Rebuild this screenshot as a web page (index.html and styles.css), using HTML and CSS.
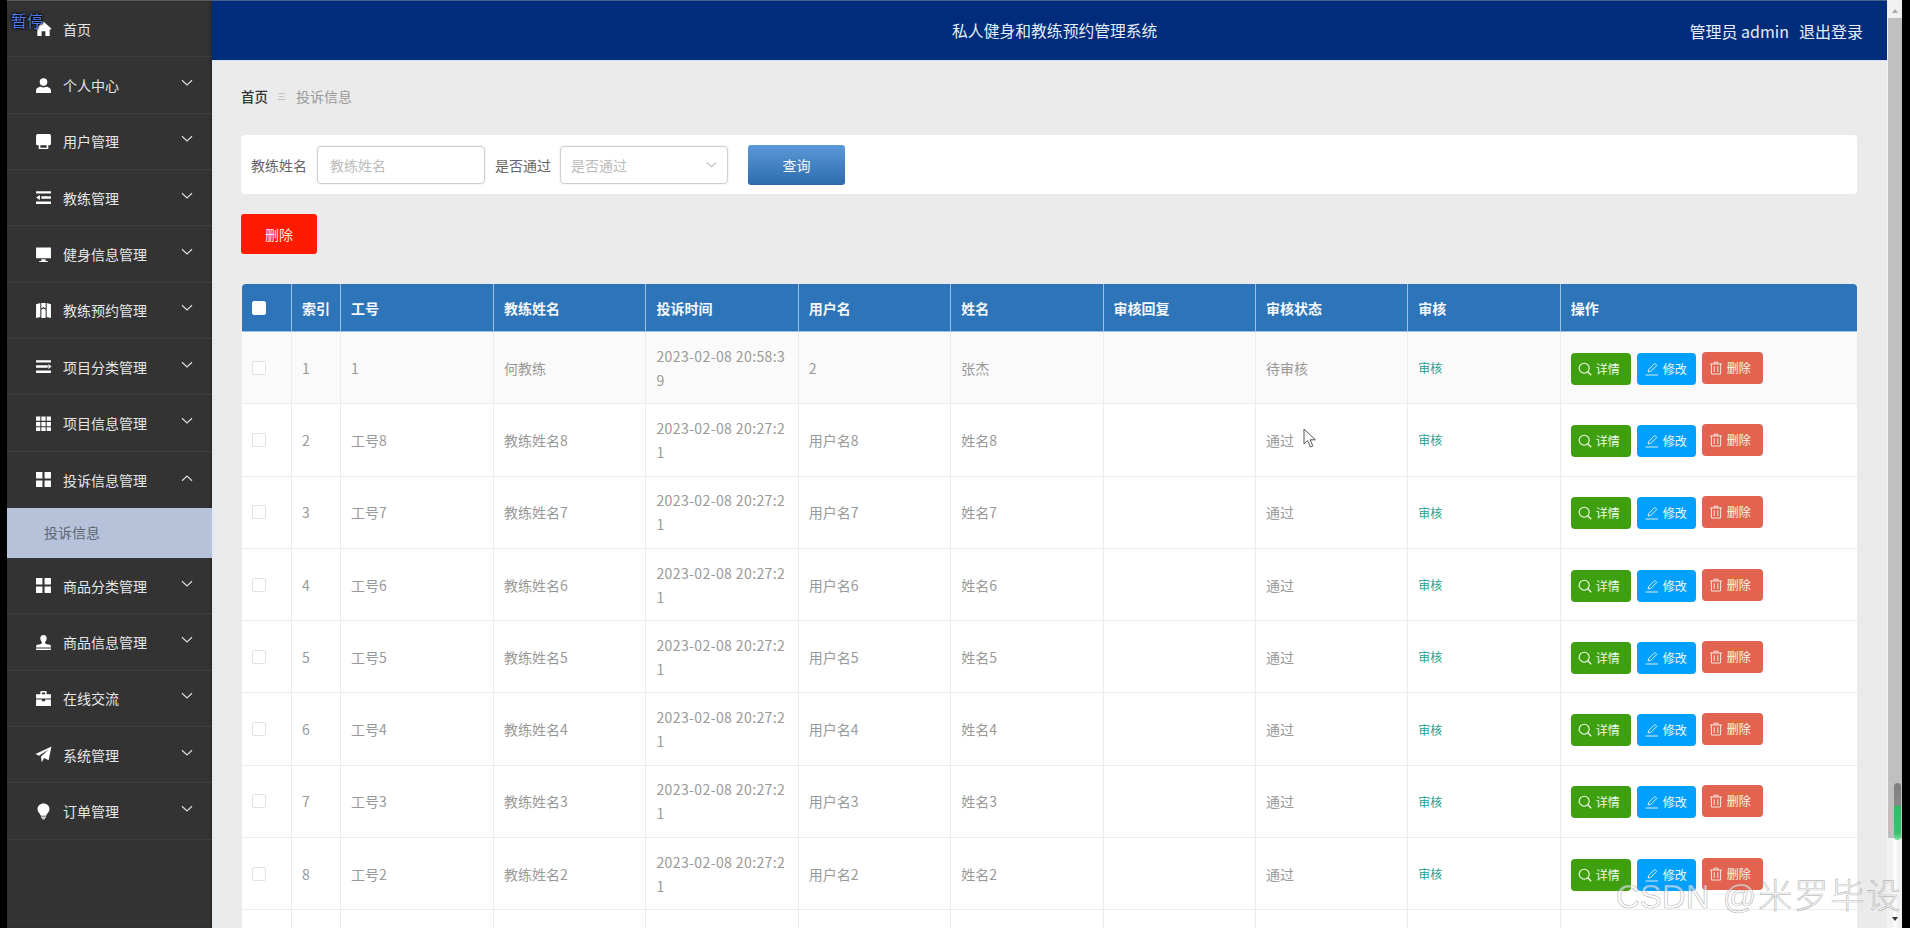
FILE: index.html
```html
<!DOCTYPE html>
<html lang="zh-CN">
<head>
<meta charset="utf-8">
<title>私人健身和教练预约管理系统</title>
<link rel="stylesheet" href="styles.css">
</head>
<body>
<svg class="sprite" xmlns="http://www.w3.org/2000/svg">
  <symbol id="i-home" viewBox="0 0 16 16"><path d="M8 1.5 0.5 8.2 1.5 9.2 2.2 8.6V15H6.2V10.5H9.8V15H13.8V8.6L14.5 9.2 15.5 8.2Z"/></symbol>
  <symbol id="i-user" viewBox="0 0 16 16"><circle cx="8" cy="4.8" r="3.6"/><path d="M1 15V12.8C1 10.4 3.6 9.4 5.4 9.2 6.6 10 9.4 10 10.6 9.2 12.4 9.4 15 10.4 15 12.8V15Z"/></symbol>
  <symbol id="i-print" viewBox="0 0 16 16"><path d="M2.5 1H13.5Q15 1 15 2.5V10Q15 11.5 13.5 11.5H12.5V15H3.5V11.5H2.5Q1 11.5 1 10V2.5Q1 1 2.5 1ZM5 11.5V13.8H11V11.5Z"/></symbol>
  <symbol id="i-indent" viewBox="0 0 16 16"><path d="M1 2H15V4.2H1ZM6 6.9H15V9.1H6ZM1 11.8H15V14H1ZM4.6 5.6V10.4L1 8Z"/></symbol>
  <symbol id="i-desktop" viewBox="0 0 16 16"><path d="M1 1.5H15V11.5H1ZM6 12.5H10V14H12V15H4V14H6Z"/></symbol>
  <symbol id="i-map" viewBox="0 0 16 16"><path d="M1 2 5 1V14L1 15ZM6 1H10V6L8 4.6 6 6ZM11 1 15 2V15L11 14ZM6 7.4 8 6 10 7.4V15H6Z"/></symbol>
  <symbol id="i-list" viewBox="0 0 16 16"><path d="M1 2H15V4.2H1ZM1 6.9H12V9.1H1ZM1 11.8H15V14H1ZM12.6 5.6 15.6 8 12.6 10.4Z"/></symbol>
  <symbol id="i-table" viewBox="0 0 16 16"><path d="M1 1.5H5V5.5H1ZM6 1.5H10V5.5H6ZM11 1.5H15V5.5H11ZM1 6.5H5V10.5H1ZM6 6.5H10V10.5H6ZM11 6.5H15V10.5H11ZM1 11.5H5V15H1ZM6 11.5H10V15H6ZM11 11.5H15V15H11Z"/></symbol>
  <symbol id="i-grid" viewBox="0 0 16 16"><path d="M1 1H7V7H1ZM9 1H15V7H9ZM1 9H7V15H1ZM9 9H15V15H9Z"/></symbol>
  <symbol id="i-stamp" viewBox="0 0 16 16"><path d="M8 1C10 1 11 2.4 11 4 11 5.6 10.2 6.6 9.6 7.6 9.2 8.6 9.8 9.4 11 9.6L14 10.2Q15 10.5 15 12V12.6H1V12Q1 10.5 2 10.2L5 9.6C6.2 9.4 6.8 8.6 6.4 7.6 5.8 6.6 5 5.6 5 4 5 2.4 6 1 8 1ZM1 13.6H15V15H1Z"/></symbol>
  <symbol id="i-case" viewBox="0 0 16 16"><path d="M5 4V2Q5 1 6 1H10Q11 1 11 2V4H15V8H1V4ZM6.4 4H9.6V2.4H6.4ZM1 9H6.5V10.5H9.5V9H15V15H1Z"/></symbol>
  <symbol id="i-plane" viewBox="0 0 16 16"><path d="M15.5 0.5 12.8 13.5 8.6 11.4 6.4 15.4 5.6 10.2 13 3 3.8 9.2 0.5 7.6Z"/></symbol>
  <symbol id="i-bulb" viewBox="0 0 16 16"><path d="M8 0.5C11.4 0.5 13.6 3 13.6 5.8 13.6 8.6 11 9.8 10.6 12H5.4C5 9.8 2.4 8.6 2.4 5.8 2.4 3 4.6 0.5 8 0.5ZM5.6 12.8H10.4V13.8H5.6ZM6.4 14.4H9.6L8.8 15.5H7.2Z"/></symbol>
  <symbol id="i-chev" viewBox="0 0 12 8"><path d="M1 1.2 6 6 11 1.2" fill="none" stroke="currentColor" stroke-width="1.2"/></symbol>
  <symbol id="i-search" viewBox="0 0 14 14"><circle cx="6.2" cy="6.2" r="5" fill="none" stroke="currentColor" stroke-width="1.1"/><path d="M9.8 9.8 13.2 13.2" fill="none" stroke="currentColor" stroke-width="1.3"/></symbol>
  <symbol id="i-edit" viewBox="0 0 14 14"><path d="M3 10 3.8 7.4 9.8 1.4 11.8 3.4 5.8 9.4ZM0.5 13H13" fill="none" stroke="currentColor" stroke-width=".9"/></symbol>
  <symbol id="i-trash" viewBox="0 0 14 14"><path d="M1 3H13M5 3V1.2H9V3M2.4 3V13H11.6V3M5.2 5.2V11M8.8 5.2V11" fill="none" stroke="currentColor" stroke-width=".9"/></symbol>
</svg>

<div class="screen">
  <nav class="sidebar">
    <a class="nav-item"><svg class="nav-icon"><use href="#i-home"/></svg><span>首页</span></a>
    <a class="nav-item"><svg class="nav-icon"><use href="#i-user"/></svg><span>个人中心</span><svg class="chev"><use href="#i-chev"/></svg></a>
    <a class="nav-item"><svg class="nav-icon"><use href="#i-print"/></svg><span>用户管理</span><svg class="chev"><use href="#i-chev"/></svg></a>
    <a class="nav-item"><svg class="nav-icon"><use href="#i-indent"/></svg><span>教练管理</span><svg class="chev"><use href="#i-chev"/></svg></a>
    <a class="nav-item"><svg class="nav-icon"><use href="#i-desktop"/></svg><span>健身信息管理</span><svg class="chev"><use href="#i-chev"/></svg></a>
    <a class="nav-item"><svg class="nav-icon"><use href="#i-map"/></svg><span>教练预约管理</span><svg class="chev"><use href="#i-chev"/></svg></a>
    <a class="nav-item"><svg class="nav-icon"><use href="#i-list"/></svg><span>项目分类管理</span><svg class="chev"><use href="#i-chev"/></svg></a>
    <a class="nav-item"><svg class="nav-icon"><use href="#i-table"/></svg><span>项目信息管理</span><svg class="chev"><use href="#i-chev"/></svg></a>
    <a class="nav-item open"><svg class="nav-icon"><use href="#i-grid"/></svg><span>投诉信息管理</span><svg class="chev up"><use href="#i-chev"/></svg></a>
    <a class="nav-sub">投诉信息</a>
    <a class="nav-item"><svg class="nav-icon"><use href="#i-grid"/></svg><span>商品分类管理</span><svg class="chev"><use href="#i-chev"/></svg></a>
    <a class="nav-item"><svg class="nav-icon"><use href="#i-stamp"/></svg><span>商品信息管理</span><svg class="chev"><use href="#i-chev"/></svg></a>
    <a class="nav-item"><svg class="nav-icon"><use href="#i-case"/></svg><span>在线交流</span><svg class="chev"><use href="#i-chev"/></svg></a>
    <a class="nav-item"><svg class="nav-icon"><use href="#i-plane"/></svg><span>系统管理</span><svg class="chev"><use href="#i-chev"/></svg></a>
    <a class="nav-item"><svg class="nav-icon"><use href="#i-bulb"/></svg><span>订单管理</span><svg class="chev"><use href="#i-chev"/></svg></a>
  </nav>

  <div class="right">
    <header class="topbar">
      <div class="title">私人健身和教练预约管理系统</div>
      <div class="account"><span>管理员 admin</span><span>退出登录</span></div>
    </header>
    <main class="main">
      <div class="crumbs"><b>首页</b><i>三</i><span>投诉信息</span></div>
      <form class="search">
        <label>教练姓名</label>
        <div class="field input-field">教练姓名</div>
        <label>是否通过</label>
        <div class="field select-field">是否通过<svg class="select-arrow"><use href="#i-chev"/></svg></div>
        <button class="query" type="button">查询</button>
      </form>
      <button class="bulk-del" type="button">删除</button>
      <table class="grid">
        <thead>
          <tr>
            <th class="c-c"><span class="check head"></span></th><th class="c-s">索引</th><th class="c-g">工号</th><th class="c-m">教练姓名</th><th class="c-m">投诉时间</th><th class="c-m">用户名</th><th class="c-m">姓名</th><th class="c-m">审核回复</th><th class="c-m">审核状态</th><th class="c-m">审核</th><th>操作</th>
          </tr>
        </thead>
        <tbody>
          <tr><td><span class="check"></span></td><td>1</td><td>1</td><td>何教练</td><td class="time">2023-02-08 20:58:39</td><td>2</td><td>张杰</td><td></td><td>待审核</td><td><a class="audit">审核</a></td><td><div class="ops"><a class="btn green"><svg><use href="#i-search"/></svg>详情</a><a class="btn blue"><svg><use href="#i-edit"/></svg>修改</a><a class="btn red"><svg><use href="#i-trash"/></svg>删除</a></div></td></tr>
          <tr><td><span class="check"></span></td><td>2</td><td>工号8</td><td>教练姓名8</td><td class="time">2023-02-08 20:27:21</td><td>用户名8</td><td>姓名8</td><td></td><td>通过</td><td><a class="audit">审核</a></td><td><div class="ops"><a class="btn green"><svg><use href="#i-search"/></svg>详情</a><a class="btn blue"><svg><use href="#i-edit"/></svg>修改</a><a class="btn red"><svg><use href="#i-trash"/></svg>删除</a></div></td></tr>
          <tr><td><span class="check"></span></td><td>3</td><td>工号7</td><td>教练姓名7</td><td class="time">2023-02-08 20:27:21</td><td>用户名7</td><td>姓名7</td><td></td><td>通过</td><td><a class="audit">审核</a></td><td><div class="ops"><a class="btn green"><svg><use href="#i-search"/></svg>详情</a><a class="btn blue"><svg><use href="#i-edit"/></svg>修改</a><a class="btn red"><svg><use href="#i-trash"/></svg>删除</a></div></td></tr>
          <tr><td><span class="check"></span></td><td>4</td><td>工号6</td><td>教练姓名6</td><td class="time">2023-02-08 20:27:21</td><td>用户名6</td><td>姓名6</td><td></td><td>通过</td><td><a class="audit">审核</a></td><td><div class="ops"><a class="btn green"><svg><use href="#i-search"/></svg>详情</a><a class="btn blue"><svg><use href="#i-edit"/></svg>修改</a><a class="btn red"><svg><use href="#i-trash"/></svg>删除</a></div></td></tr>
          <tr><td><span class="check"></span></td><td>5</td><td>工号5</td><td>教练姓名5</td><td class="time">2023-02-08 20:27:21</td><td>用户名5</td><td>姓名5</td><td></td><td>通过</td><td><a class="audit">审核</a></td><td><div class="ops"><a class="btn green"><svg><use href="#i-search"/></svg>详情</a><a class="btn blue"><svg><use href="#i-edit"/></svg>修改</a><a class="btn red"><svg><use href="#i-trash"/></svg>删除</a></div></td></tr>
          <tr><td><span class="check"></span></td><td>6</td><td>工号4</td><td>教练姓名4</td><td class="time">2023-02-08 20:27:21</td><td>用户名4</td><td>姓名4</td><td></td><td>通过</td><td><a class="audit">审核</a></td><td><div class="ops"><a class="btn green"><svg><use href="#i-search"/></svg>详情</a><a class="btn blue"><svg><use href="#i-edit"/></svg>修改</a><a class="btn red"><svg><use href="#i-trash"/></svg>删除</a></div></td></tr>
          <tr><td><span class="check"></span></td><td>7</td><td>工号3</td><td>教练姓名3</td><td class="time">2023-02-08 20:27:21</td><td>用户名3</td><td>姓名3</td><td></td><td>通过</td><td><a class="audit">审核</a></td><td><div class="ops"><a class="btn green"><svg><use href="#i-search"/></svg>详情</a><a class="btn blue"><svg><use href="#i-edit"/></svg>修改</a><a class="btn red"><svg><use href="#i-trash"/></svg>删除</a></div></td></tr>
          <tr><td><span class="check"></span></td><td>8</td><td>工号2</td><td>教练姓名2</td><td class="time">2023-02-08 20:27:21</td><td>用户名2</td><td>姓名2</td><td></td><td>通过</td><td><a class="audit">审核</a></td><td><div class="ops"><a class="btn green"><svg><use href="#i-search"/></svg>详情</a><a class="btn blue"><svg><use href="#i-edit"/></svg>修改</a><a class="btn red"><svg><use href="#i-trash"/></svg>删除</a></div></td></tr>
          <tr><td></td><td></td><td></td><td></td><td></td><td></td><td></td><td></td><td></td><td></td><td></td></tr>
        </tbody>
      </table>
    </main>
  </div>

  <aside class="scrollbar">
    <div class="sb-arrow sb-up"></div>
    <div class="sb-thumb"></div>
    <div class="sb-track"><div class="sb-arrow sb-down"></div></div>
    <div class="sb-pill"></div>
  </aside>
</div>

<div class="paused">暂停</div>
<svg class="cursor" viewBox="0 0 14 20"><path d="M1 1V16L4.6 12.6 7.4 19 9.8 18 7.2 11.8H12.4Z" fill="#fff" stroke="#555" stroke-width="1"/></svg>
<div class="watermark">CSDN @<span>米罗毕设</span></div>
</body>
</html>
```

FILE: styles.css
```css
* { box-sizing: border-box; }
html, body { margin: 0; height: 100%; }
body {
  position: relative;
  overflow: hidden;
  background: #000;
  font-family: "Noto Sans CJK SC", "Noto Sans", sans-serif;
  font-size: 14px;
  color: #999;
}
.sprite { position: absolute; width: 0; height: 0; }

.screen { display: flex; height: 928px; padding: 0 8px 0 7px; }

/* sidebar */
.sidebar {
  flex: 0 0 205px;
  background: #333;
  border-top: 1px solid #5c5c5c;
  box-shadow: inset -2px 0 2px #2b2b2b;
}
.nav-item {
  display: flex;
  align-items: center;
  height: 56.35px;
  padding: 0 19px 0 28px;
  border-bottom: 1px solid #3d3d3d;
  color: #e6e6e6;
  line-height: 20px;
}
.nav-item span { flex: 1; }
.nav-item.open { border-bottom: 0; }
.nav-icon { width: 17px; height: 17px; margin-right: 11px; fill: #fff; }
.chev { width: 12px; height: 8px; margin-bottom: 4px; color: #ddd; }
.chev.up { transform: rotate(180deg); }
.nav-sub {
  display: flex;
  align-items: center;
  height: 50px;
  padding-left: 37px;
  padding-bottom: 2px;
  background: #b5c2da;
  color: #5f6672;
}

/* right column */
.right { flex: 0 0 1675px; display: flex; flex-direction: column; min-width: 0; }
.topbar {
  flex: 0 0 60px;
  display: grid;
  grid-template-columns: 1fr auto;
  align-items: center;
  padding: 0 24px 0 0;
  background: #002c7c;
  border-top: 1px solid #4a6088;
  color: #e6edf7;
}
.title { font-size: 15.8px; text-align: center; padding-left: 208px; }
.account { display: flex; gap: 10px; font-size: 16px; }

.main {
  flex: 1;
  overflow: hidden;
  padding: 25px 30px 0 26px;
  background: #ebebeb;
  border-top: 1px solid #d5e3f5;
  border-left: 3px solid #e3e9f5;
}
.crumbs { display: flex; align-items: center; height: 20px; font-size: 14px; }
.crumbs b { color: #333; font-weight: 500; font-size: 13.5px; }
.crumbs i { margin: 0 10px 0 9px; font-style: normal; font-size: 9px; color: #bbb; }
.crumbs span { color: #9a9a9a; }

.search {
  display: flex;
  align-items: center;
  height: 59px;
  margin-top: 29px;
  padding-left: 10px;
  background: #fff;
  border-radius: 4px;
  color: #666;
}
.search label { width: 56px; white-space: nowrap; }
.field {
  display: flex;
  align-items: center;
  height: 38px;
  width: 168px;
  border: 1px solid #cfcfcf;
  box-shadow: 0 0 2px #ddd;
  border-radius: 4px;
  color: #bbb;
}
.input-field { margin: 0 10px; padding-left: 12px; }
.select-field { margin-left: 9px; padding: 0 10px; justify-content: space-between; }
.select-arrow { width: 11px; height: 8px; color: #bbb; }
.query {
  width: 97px;
  height: 40px;
  margin-left: 20px;
  border: 0;
  border-radius: 3px;
  background: linear-gradient(#5b98d8, #2c6cae);
  color: #f2f6fb;
  font: inherit;
}
.bulk-del {
  display: block;
  width: 76px;
  height: 40px;
  margin-top: 20px;
  border: 0;
  border-radius: 3px;
  background: #ff1a00;
  color: #ffe9e6;
  font: 14px "Noto Sans CJK SC", sans-serif;
}

/* table */
.grid {
  width: 1615px;
  margin: 30px 0 0 1px;
  table-layout: fixed;
  border-collapse: separate;
  border-spacing: 0;
}
.c-c { width: 50px; }
.c-s { width: 49px; }
.c-g { width: 153px; }
.c-m { width: 152.4px; }
.grid th {
  height: 48px;
  padding: 0 10px;
  background: #2d75b8;
  border-right: 1px solid #9cc1e2;
  border-bottom: 1px solid #9cc1e2;
  color: #f4f7fb;
  font-weight: 700;
  text-align: left;
}
.grid th:first-child { border-top-left-radius: 4px; }
.grid th:last-child { border-top-right-radius: 4px; border-right: 0; }
.grid td {
  height: 72.3px;
  padding: 0 10px;
  border-right: 1px solid #ececec;
  border-bottom: 1px solid #ececec;
  background: #fff;
  line-height: 24px;
  color: #999;
}
.grid td:last-child { border-right: 0; }
.grid tbody tr:first-child td { background: #fafafa; }
.time { word-break: break-all; letter-spacing: .4px; }
.check {
  display: block;
  width: 14px;
  height: 14px;
  background: #fff;
  border: 1px solid #e2e2e2;
  border-radius: 2px;
}
.check.head { border-color: #fff; }
.audit { color: #2b9d8a; font-size: 12px; }
.ops { display: flex; align-items: center; gap: 6px; padding-top: 2px; }
.btn {
  display: flex;
  align-items: center;
  gap: 4px;
  width: 60px;
  height: 32px;
  padding-left: 7px;
  border-radius: 4px;
  color: #f2f8ee;
  font-size: 12px;
  line-height: 1;
}
.btn svg { width: 14px; height: 14px; }
.green { background: #3fa00f; }
.blue { background: #00a0ff; width: 59px; padding-left: 8px; }
.red { background: #e2634f; width: 61px; padding-left: 7px; margin-bottom: 2px; }

/* video-player scrollbar */
.scrollbar {
  position: relative;
  flex: 0 0 15px;
  display: flex;
  flex-direction: column;
  background: #f1f1f1;
  padding-left: 1px;
}
.sb-arrow { flex: 0 0 18px; position: relative; }
.sb-up::after, .sb-down::after {
  content: "";
  position: absolute;
  left: 4px;
  border: 3px solid transparent;
}
.sb-up::after { top: 6px; border-bottom: 4px solid #a8a8a8; }
.sb-thumb { flex: 0 0 820px; background: #c0c0c0; }
.sb-track { flex: 1; position: relative; background: linear-gradient(90deg, #f1f1f1 30%, #fff 50%, #f1f1f1 70%); }
.sb-down { position: absolute; left: 0; right: 0; bottom: 0; height: 20px; }
.sb-down::after { top: 9px; border-top: 4px solid #333; }
.sb-pill {
  position: absolute;
  left: 7px;
  top: 783px;
  width: 7px;
  height: 57px;
  border-radius: 4px;
  background: linear-gradient(#7f7f7f 0, #8a8a8a 38%, #2fbd66 42%, #37c46d 88%, #7fe09f 100%);
}

/* overlays */
.paused {
  position: absolute;
  left: 11px;
  top: 9px;
  font-size: 16px;
  line-height: 22px;
  color: #4f78e8;
  text-shadow: 0 0 2px #000, 0 0 2px #000, 0 0 3px #000;
}
.cursor { position: absolute; left: 1303px; top: 428px; width: 14px; height: 20px; }
.watermark {
  position: absolute;
  left: 1616px;
  top: 872px;
  font-family: "Liberation Sans", "Noto Sans CJK SC", sans-serif;
  font-size: 33px;
  line-height: 44px;
  word-spacing: 4px;
  white-space: nowrap;
  color: rgba(255, 255, 255, .55);
  -webkit-text-stroke: .7px rgba(120, 120, 120, .5);
}
.watermark span {
  margin-left: 2px;
  font-size: 34px;
  letter-spacing: 2px;
  font-family: "Noto Sans CJK SC", sans-serif;
  font-weight: 300;
}
```
